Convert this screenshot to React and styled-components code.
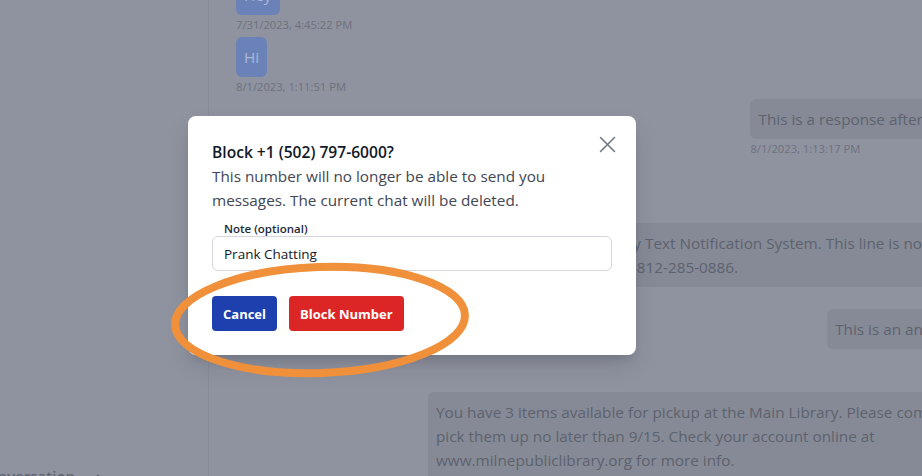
import React from 'react';
import styled, { createGlobalStyle } from 'styled-components';
import { ChevronUp } from 'lucide-react';

const GlobalStyle = createGlobalStyle`
  html, body {
    margin: 0;
    padding: 0;
  }
  body {
    font-family: 'Open Sans', 'Noto Sans', sans-serif;
  }
`;

const Page = styled.div`
  position: relative;
  width: 922px;
  height: 476px;
  overflow: hidden;
  display: flex;
  background: #8f939f;
`;

const Sidebar = styled.aside`
  width: 208px;
  flex: none;
  border-right: 1px solid #878b97;
  display: flex;
  flex-direction: column;
  justify-content: flex-end;
`;

const SidebarFooter = styled.div`
  height: 10px;
  display: flex;
  align-items: flex-start;
  gap: 16px;
  margin-left: -21px;
  color: #5f6470;
  font-size: 15px;
  font-weight: 600;
  line-height: 20px;
`;

const Chat = styled.main`
  flex: none;
  width: 745px;
  padding: 0 0 0 27px;
  margin-top: -25px;
  display: flex;
  flex-direction: column;
  gap: 4px;
`;

const Row = styled.div`
  display: flex;
  justify-content: ${(p) => (p.$out ? 'flex-end' : 'flex-start')};
  margin-bottom: ${(p) => p.$after || 0}px;
`;

const Stack = styled.div`
  display: flex;
  flex-direction: column;
  align-items: flex-start;
`;

const Bubble = styled.div`
  box-sizing: border-box;
  padding: 8px;
  border-radius: 6px;
  font-size: 15.3px;
  line-height: 24px;
  white-space: nowrap;
  width: ${(p) => (p.$wide ? '553px' : 'auto')};
  background: ${(p) => (p.$tone === 'blue' ? '#6b82b9' : '#868a96')};
  color: ${(p) => (p.$tone === 'blue' ? '#a9b6d7' : '#5d626e')};
`;

const Stamp = styled.div`
  margin-top: 2px;
  font-size: 11.2px;
  line-height: 16px;
  color: #6d717e;
`;

const Dialog = styled.div`
  position: absolute;
  left: 188px;
  top: 116px;
  width: 448px;
  box-sizing: border-box;
  padding: 24px;
  background: #fff;
  border-radius: 8px;
  box-shadow: 0 12px 24px -6px rgba(40, 44, 56, 0.25), 0 6px 10px -4px rgba(40, 44, 56, 0.12);
`;

const CloseButton = styled.button`
  position: absolute;
  top: 20px;
  right: 20px;
  width: 17px;
  height: 17px;
  padding: 0;
  border: 0;
  background: none;
  display: flex;
  align-items: center;
  justify-content: center;
`;

const Title = styled.h2`
  margin: 0;
  font-size: 15.6px;
  font-weight: 600;
  line-height: 24px;
  color: #111827;
`;

const Body = styled.p`
  margin: 0;
  font-size: 15.3px;
  line-height: 24px;
  color: #3f4653;
`;

const FieldLabel = styled.label`
  display: block;
  margin: 9px 0 0 12px;
  font-size: 11.5px;
  font-weight: 600;
  line-height: 15px;
  color: #1f2937;
`;

const NoteInput = styled.input`
  display: block;
  width: 100%;
  height: 35px;
  box-sizing: border-box;
  padding: 0 11px;
  border: 1px solid #d4d7dd;
  border-radius: 6px;
  font-family: inherit;
  font-size: 13.5px;
  color: #111827;
  outline: none;
`;

const Actions = styled.div`
  display: flex;
  gap: 12px;
  margin-top: 25px;
`;

const ActionButton = styled.button`
  height: 35px;
  padding: 0 11px;
  border: 0;
  border-radius: 4px;
  font-family: inherit;
  font-size: 13px;
  font-weight: 700;
  color: #fff;
  background: ${(p) => (p.$danger ? '#dc2626' : '#1e40af')};
`;

const Annotation = styled.svg`
  position: absolute;
  left: 0;
  top: 0;
  pointer-events: none;
`;

const messages = [
  { id: 1, tone: 'blue', lines: ['Hey'], stamp: '7/31/2023, 4:45:22 PM' },
  { id: 2, tone: 'blue', lines: ['Hi'], stamp: '8/1/2023, 1:11:51 PM' },
  { id: 3, out: true, lines: ['This is a response after a wait.'], stamp: '8/1/2023, 1:13:17 PM' },
  { id: 4, tone: 'blue', lines: ['Hello'], stamp: '8/1/2023, 1:14:02 PM' },
  {
    id: 5,
    out: true,
    wide: true,
    lines: [
      'Welcome to the Milne library Text Notification System. This line is not monitored.',
      'For assistance, you may call 812-285-0886.',
    ],
    stamp: '8/1/2023, 1:15:40 PM',
  },
  { id: 6, out: true, lines: ['This is an answer ...'], after: 39 },
  {
    id: 7,
    out: true,
    wide: true,
    lines: [
      'You have 3 items available for pickup at the Main Library. Please come by to',
      'pick them up no later than 9/15. Check your account online at',
      'www.milnepubliclibrary.org for more info.',
    ],
  },
];

const App = () => {
  return (
    <>
      <GlobalStyle />
      <Page>
        <Sidebar>
          <SidebarFooter>
            <span>Conversation</span>
            <ChevronUp size={14} strokeWidth={2} style={{ marginTop: 4 }} />
          </SidebarFooter>
        </Sidebar>
        <Chat>
          {messages.map((m) => (
            <Row key={m.id} $out={m.out} $after={m.after}>
              <Stack>
                <Bubble $tone={m.tone} $wide={m.wide}>
                  {m.lines.map((line, i) => (
                    <div key={i}>{line}</div>
                  ))}
                </Bubble>
                {m.stamp && <Stamp>{m.stamp}</Stamp>}
              </Stack>
            </Row>
          ))}
        </Chat>

        <Dialog role="dialog">
          <CloseButton aria-label="Close">
            <svg width="17" height="17" viewBox="0 0 17 17">
              <path d="M1.5 1.5 L15.5 15.5 M15.5 1.5 L1.5 15.5" stroke="#6b7280" strokeWidth="1.5" strokeLinecap="round" />
            </svg>
          </CloseButton>
          <Title>Block +1 (502) 797-6000?</Title>
          <Body>
            This number will no longer be able to send you messages. The current chat will be deleted.
          </Body>
          <FieldLabel htmlFor="note">Note (optional)</FieldLabel>
          <NoteInput id="note" defaultValue="Prank Chatting" />
          <Actions>
            <ActionButton>Cancel</ActionButton>
            <ActionButton $danger>Block Number</ActionButton>
          </Actions>
        </Dialog>

        <Annotation width="922" height="476">
          <ellipse
            cx="320"
            cy="320"
            rx="145"
            ry="53"
            fill="none"
            stroke="#f0903a"
            strokeWidth="8"
            transform="rotate(-2 320 320)"
          />
        </Annotation>
      </Page>
    </>
  );
};

export default App;
